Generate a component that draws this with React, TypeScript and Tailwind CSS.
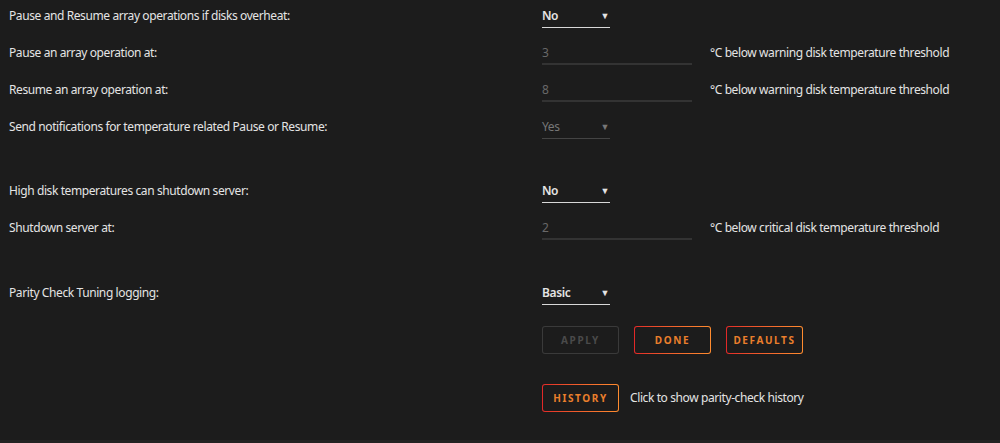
import React from "react";

type Row =
  | { label: string; kind: "select"; value: string; disabled?: boolean }
  | { label: string; kind: "input"; value: string; suffix: string };

const groups: Row[][] = [
  [
    { label: "Pause and Resume array operations if disks overheat:", kind: "select", value: "No" },
    { label: "Pause an array operation at:", kind: "input", value: "3", suffix: "°C below warning disk temperature threshold" },
    { label: "Resume an array operation at:", kind: "input", value: "8", suffix: "°C below warning disk temperature threshold" },
    { label: "Send notifications for temperature related Pause or Resume:", kind: "select", value: "Yes", disabled: true },
  ],
  [
    { label: "High disk temperatures can shutdown server:", kind: "select", value: "No" },
    { label: "Shutdown server at:", kind: "input", value: "2", suffix: "°C below critical disk temperature threshold" },
  ],
  [{ label: "Parity Check Tuning logging:", kind: "select", value: "Basic" }],
];

const GradientButton = ({ text, disabled }: { text: string; disabled?: boolean }) => (
  <div
    className={
      disabled
        ? "w-[77px] h-[28px] rounded-[3px] p-px bg-[#3a3a3a]"
        : "w-[77px] h-[28px] rounded-[3px] p-px bg-gradient-to-r from-[#e22828] to-[#ff8c2f]"
    }
  >
    <div
      className={
        disabled
          ? "w-full h-full rounded-[2px] bg-[#1c1c1c] flex items-center justify-center text-[10px] font-bold tracking-[1.6px] text-[#4a4a4a]"
          : "w-full h-full rounded-[2px] bg-[#1c1c1c] flex items-center justify-center text-[10px] font-bold tracking-[1.6px] text-[#ea7f2c]"
      }
    >
      {text}
    </div>
  </div>
);

const Control = ({ row }: { row: Row }) => {
  if (row.kind === "select") {
    return (
      <div
        className={
          row.disabled
            ? "w-[68px] h-[23px] flex items-center justify-between border-b border-[#444] text-[#777]"
            : "w-[68px] h-[23px] flex items-center justify-between border-b border-[#d8d8d8] text-[#e4e4e4] font-semibold"
        }
      >
        <span>{row.value}</span>
        <span className="text-[9px] pr-[1px]">▼</span>
      </div>
    );
  }
  return (
    <div className="flex items-start">
      <div className="w-[150px] h-[23px] flex items-center border-b-2 border-[#333] text-[#686868]">
        {row.value}
      </div>
      <span className="ml-[18px] h-[22px] flex items-center text-[#e4e4e4]">{row.suffix}</span>
    </div>
  );
};

export default function App() {
  return (
    <div
      className="w-[1000px] h-[443px] bg-[#1c1c1c] text-[12px] tracking-[-0.4px] text-[#e4e4e4] flex flex-col"
      style={{ fontFamily: "'Noto Sans', 'Open Sans', sans-serif" }}
    >
      <div className="flex-1 flex flex-col">
        {groups.map((group, gi) => (
          <div key={gi} className={gi === 0 ? "flex flex-col" : gi === 1 ? "flex flex-col mt-[27px]" : "flex flex-col mt-[28px]"}>
            {group.map((row) => (
              <div key={row.label} className="h-[37px] flex items-start pt-[5px]">
                <div className="w-[542px] pl-[9px] h-[22px] flex items-center">{row.label}</div>
                <Control row={row} />
              </div>
            ))}
          </div>
        ))}

        <div className="flex gap-[15px] pl-[542px] mt-[12px]">
          <GradientButton text="APPLY" disabled />
          <GradientButton text="DONE" />
          <GradientButton text="DEFAULTS" />
        </div>

        <div className="flex items-center gap-[11px] pl-[542px] mt-[30px]">
          <GradientButton text="HISTORY" />
          <span className="text-[#e4e4e4]">Click to show parity-check history</span>
        </div>
      </div>
      <div className="h-[3px] bg-[#232323]" />
    </div>
  );
}
